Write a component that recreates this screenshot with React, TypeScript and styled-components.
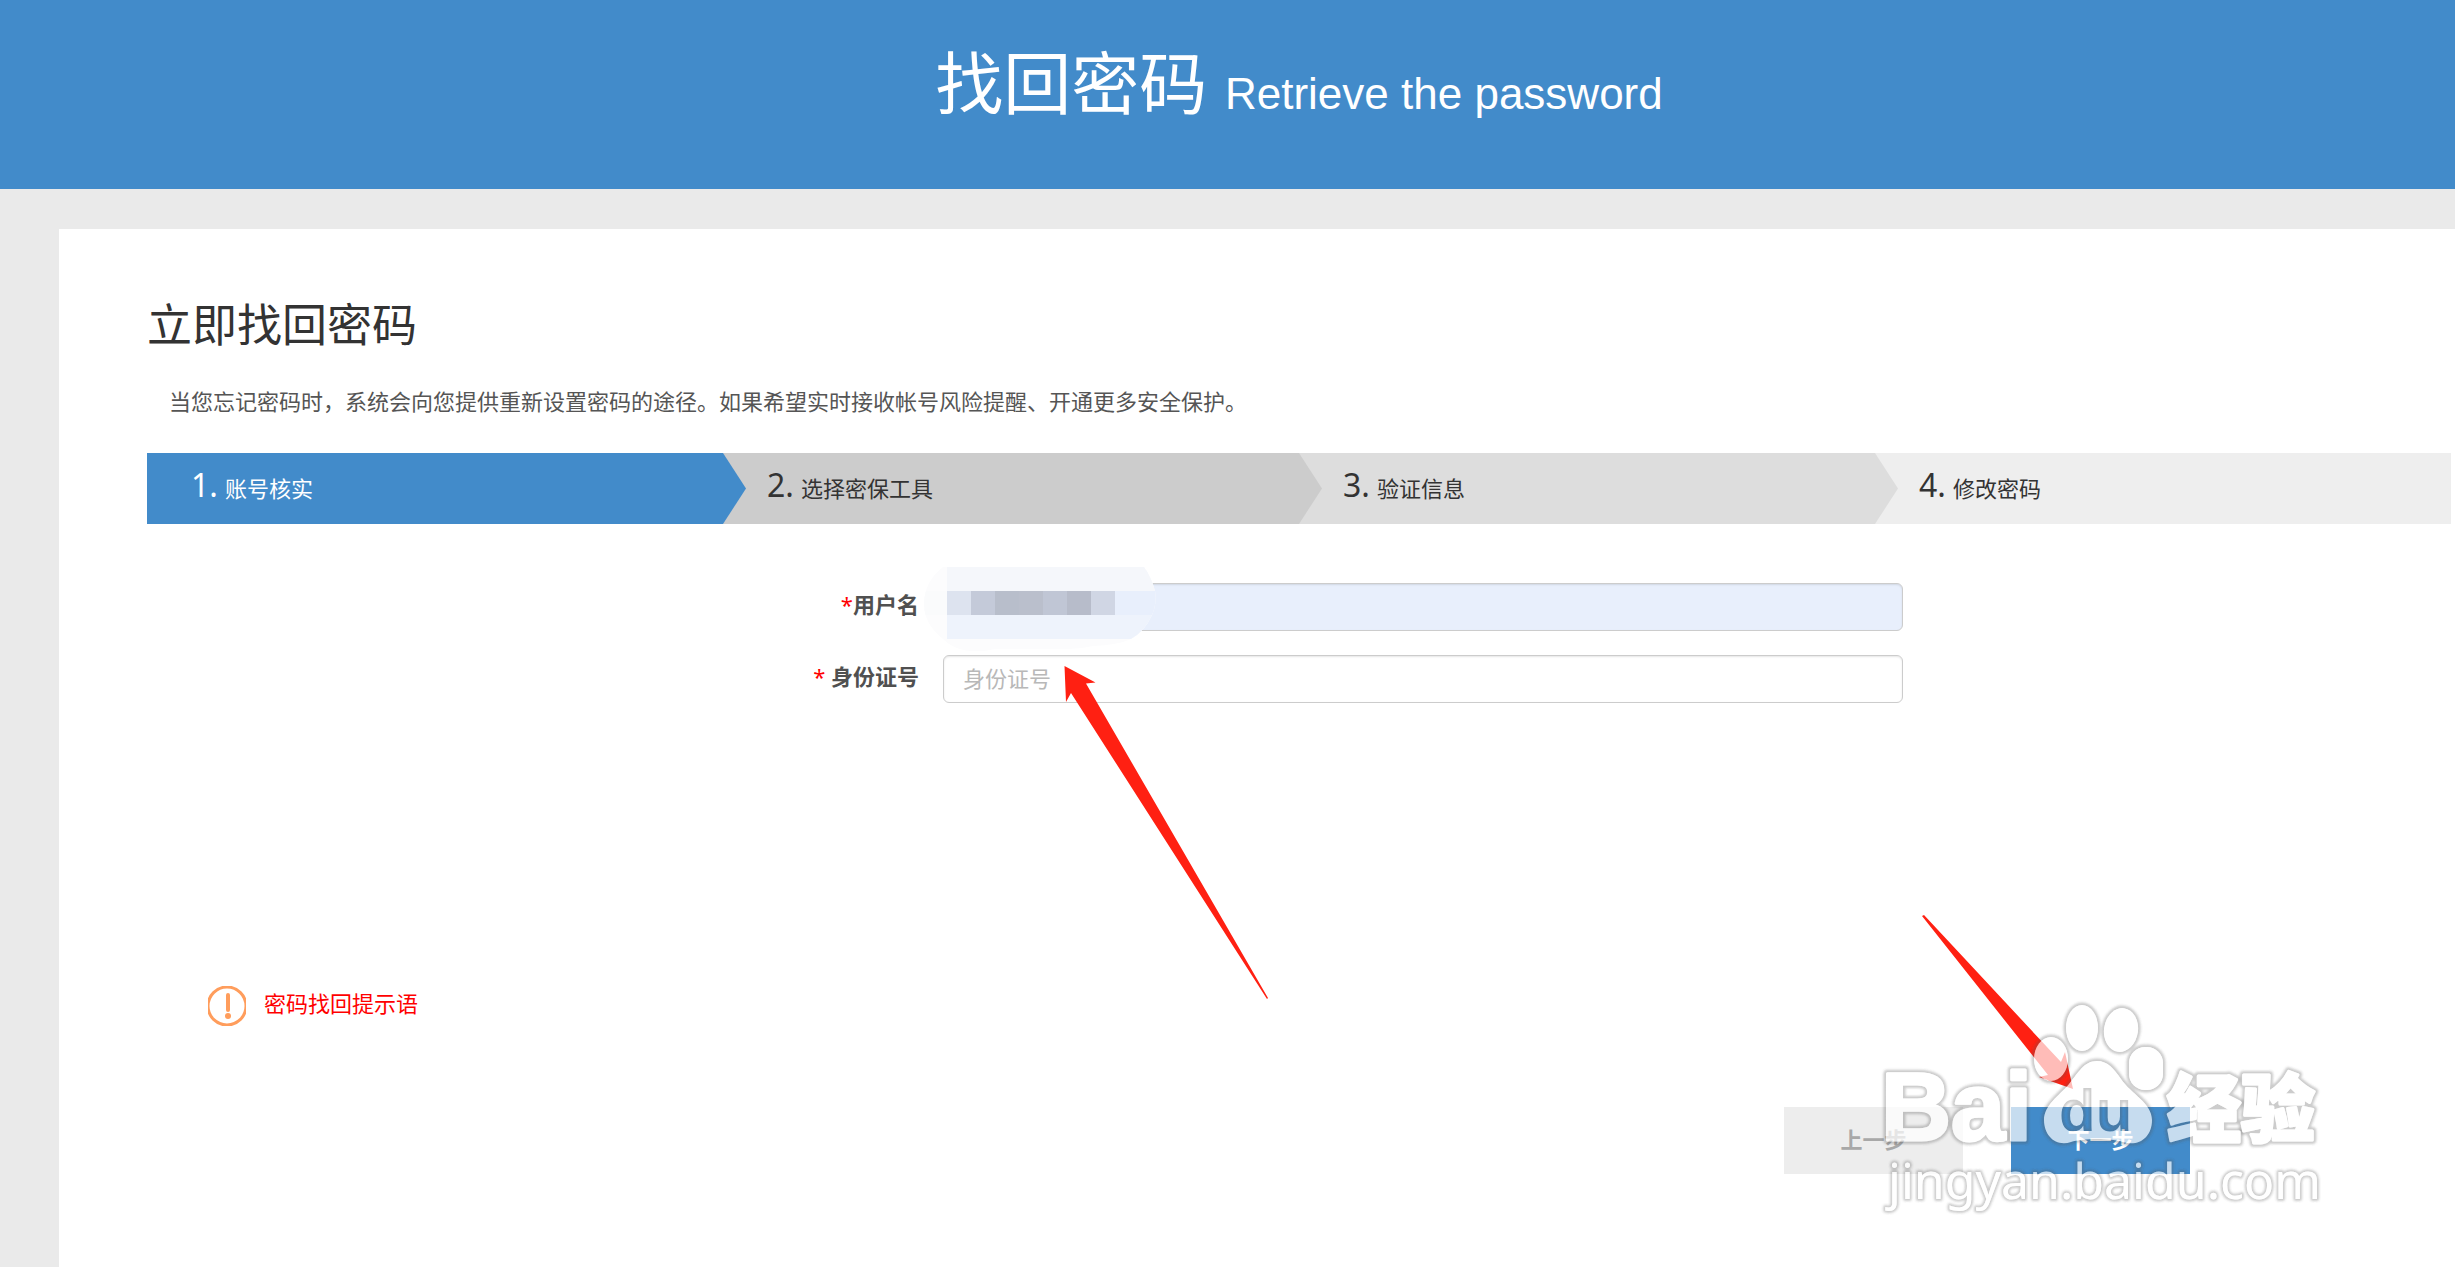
import React from "react";
import styled, { createGlobalStyle } from "styled-components";

const BLUE = "#428bca";
const RED = "#ff2012";

const GlobalStyle = createGlobalStyle`
  *, *::before, *::after { box-sizing: border-box; }
  body {
    margin: 0;
    background: #eaeaea;
    color: #333;
    font: 22px/32px "Noto Sans", "Noto Sans CJK SC", sans-serif;
  }
`;

const Page = styled.div`
  display: flex;
  flex-direction: column;
  min-height: 100vh;
`;

const Banner = styled.header`
  display: flex;
  justify-content: center;
  padding: 35px 4px 58px 147px;
  background: ${BLUE};
  color: #fff;
`;

const BannerTitle = styled.h1`
  margin: 0;
  font-size: 68px;
  line-height: 96px;
  font-weight: 400;
`;

const BannerSubtitle = styled.small`
  font-family: "Liberation Sans", Arial, sans-serif;
  font-size: 44px;
  line-height: 44px;
`;

const Panel = styled.main`
  flex: 1;
  margin: 40px 0 0 59px;
  padding: 64px 4px 68px 88px;
  background: #fff;
`;

const PanelTitle = styled.h2`
  margin: 0;
  font-size: 45px;
  line-height: 64px;
  font-weight: 400;
`;

const Intro = styled.p`
  margin: 28px 0 36px 22px;
  color: #555;
`;

const Steps = styled.ol`
  display: grid;
  grid-template-columns: repeat(4, 1fr);
  margin: 0;
  padding: 0;
  list-style: none;
`;

const Step = styled.li<{ $fill: string; $ink?: string }>`
  position: relative;
  display: flex;
  align-items: baseline;
  gap: 7px;
  height: 71px;
  padding: 10px 0 0 44px;
  line-height: 44px;
  background: ${(p) => p.$fill};
  color: ${(p) => p.$ink ?? "#333"};

  &:not(:last-child)::after {
    content: "";
    position: absolute;
    z-index: 1;
    top: 0;
    left: 100%;
    width: 23px;
    height: 100%;
    background: ${(p) => p.$fill};
    clip-path: polygon(0 0, 100% 50%, 0 100%);
  }
`;

const StepNumber = styled.span`
  font-size: 32px;
`;

const Form = styled.form`
  padding-top: 59px;
`;

const FieldRow = styled.div`
  display: grid;
  grid-template-columns: 772fr 960fr 524fr;
  column-gap: 24px;
  margin-bottom: 24px;
`;

const FieldLabel = styled.label`
  padding-top: 5px;
  height: 48px;
  text-align: right;
  font-weight: 700;
  color: #505050;
`;

const Required = styled.span`
  color: #f00;
  font-weight: 400;
`;

const InputWrap = styled.div`
  position: relative;
`;

const TextInput = styled.input<{ $filled?: boolean }>`
  display: block;
  width: 100%;
  height: 48px;
  padding: 0 19px 2px;
  border: 1px solid #ccc;
  border-radius: 6px;
  background: ${(p) => (p.$filled ? "#e8effc" : "#fff")};
  box-shadow: inset 0 1px 2px rgba(0, 0, 0, 0.1);
  color: #555;
  font: inherit;

  &::placeholder {
    color: #b8b8b8;
    opacity: 1;
  }
`;

const Overlay = styled.svg<{ $left: number; $top: number }>`
  position: absolute;
  z-index: 2;
  left: ${(p) => p.$left}px;
  top: ${(p) => p.$top}px;
  overflow: visible;
  pointer-events: none;
`;

const Notice = styled.div`
  display: flex;
  align-items: center;
  gap: 18px;
  margin: 283px 0 0 61px;
  color: #f00;
`;

const NoticeText = styled.span`
  padding-bottom: 6px;
`;

const Actions = styled.div`
  display: flex;
  justify-content: flex-end;
  gap: 48px;
  margin-top: 81px;
  padding-right: 261px;
`;

const ActionSlot = styled.div`
  position: relative;
`;

const ActionButton = styled.button<{ $primary?: boolean }>`
  display: block;
  width: 179px;
  height: 67px;
  padding: 0 0 4px;
  border: 0;
  background: ${(p) => (p.$primary ? BLUE : "#ededed")};
  color: ${(p) => (p.$primary ? "#fff" : "#a8a8a8")};
  font: inherit;
  font-weight: 700;
`;

const steps = [
  { label: "账号核实", fill: BLUE, ink: "#fff" },
  { label: "选择密保工具", fill: "#ccc" },
  { label: "验证信息", fill: "#ddd" },
  { label: "修改密码", fill: "#eee" },
];

const mosaic = ["#dde3ef", "#c4cad9", "#b8becb", "#babfcc", "#c0c6d5", "#b7bcca", "#d0d6e4"];

function Mosaic() {
  return (
    <Overlay $left={-20} $top={-17} width="234" height="88" aria-hidden="true">
      <clipPath id="blot">
        <path d="M20 1H221Q228 10 232 25Q234 38 229 49Q222 65 208 73Q195 79 170 80Q158 83 145 83H72Q50 88 34 82Q26 79 20 73Q1 58 1 38Q1 16 20 1Z" />
      </clipPath>
      <g clipPath="url(#blot)">
        <rect width="234" height="88" fill="#fcfcfd" />
        <rect x="24" width="210" height="25" fill="#f5f7fb" />
        <rect y="25" width="24" height="24" fill="#fafbfc" />
        <rect x="24" y="25" width="210" height="24" fill="#e8effc" />
        {mosaic.map((color, i) => (
          <rect key={color} x={24 + i * 24} y="25" width="24" height="24" fill={color} />
        ))}
        <rect x="24" y="49" width="210" height="24" fill="#eef3fc" />
      </g>
    </Overlay>
  );
}

function FieldArrow() {
  return (
    <Overlay $left={121} $top={10} width="206" height="336" aria-hidden="true">
      <path d="M0.5 1L31.5 17.5L22 18.5L204 333L203 334L7 28L2 37Z" fill={RED} />
    </Overlay>
  );
}

function ButtonArrow() {
  return (
    <Overlay $left={-89} $top={-193} width="154" height="178" aria-hidden="true">
      <path d="M0 2L2 1L139 148L143 138L151 175L117 163L126 161Z" fill={RED} />
    </Overlay>
  );
}

const PAW =
  "M86 31C97 31 103 39 110 49C120 64 141 73 141 90C141 108 127 117 112 112C101 108 71 108 60 112C45 117 33 106 33 90C33 75 48 66 58 54C68 42 73 31 86 31Z";

function PawShapes() {
  return (
    <>
      <ellipse cx="40" cy="29" rx="17" ry="22" />
      <ellipse cx="71" cy="-2" rx="16" ry="23" />
      <ellipse cx="110" cy="0" rx="17" ry="22" transform="rotate(8 110 0)" />
      <rect x="118" y="17" width="34" height="43" rx="16" />
      <path d={PAW} />
    </>
  );
}

function HeavyTexts() {
  return (
    <>
      <text x="-130" y="110" fontFamily="Liberation Sans, sans-serif" fontSize="97" fontWeight="700">Bai</text>
      <text x="156" y="106" fontFamily="Noto Sans CJK SC, sans-serif" fontSize="74" fontWeight="900">经验</text>
    </>
  );
}

function AddressText() {
  return (
    <text x="-123" y="169" fontFamily="Noto Sans, sans-serif" fontSize="50">jingyan.baidu.com</text>
  );
}

function DuText() {
  return (
    <text x="48" y="101" fontFamily="Liberation Sans, sans-serif" fontSize="60" fontWeight="700">du</text>
  );
}

function Watermark() {
  return (
    <Overlay $left={0} $top={-77} width="320" height="190" aria-hidden="true">
      <filter id="soft" x="-60%" y="-30%" width="220%" height="160%">
        <feGaussianBlur stdDeviation="1" />
      </filter>
      <mask id="inside" maskUnits="userSpaceOnUse" x="-150" y="-50" width="500" height="260">
        <g fill="#fff" stroke="#fff" strokeLinejoin="round">
          <g strokeWidth="0">
            <PawShapes />
            <AddressText />
          </g>
          <g strokeWidth="3">
            <HeavyTexts />
          </g>
        </g>
        <g fill="#000">
          <DuText />
        </g>
      </mask>
      <mask id="outside" maskUnits="userSpaceOnUse" x="-150" y="-50" width="500" height="260">
        <rect x="-150" y="-50" width="500" height="260" fill="#fff" />
        <g fill="#000" stroke="#000" strokeLinejoin="round">
          <g strokeWidth="0">
            <PawShapes />
            <AddressText />
          </g>
          <g strokeWidth="3">
            <HeavyTexts />
          </g>
        </g>
        <g fill="#fff">
          <DuText />
        </g>
      </mask>
      <g mask="url(#outside)">
        <g fill="none" stroke="#555" strokeOpacity="0.3" strokeLinejoin="round" filter="url(#soft)">
          <g strokeWidth="5">
            <PawShapes />
            <DuText />
          </g>
          <g strokeWidth="4">
            <AddressText />
          </g>
          <g strokeWidth="8">
            <HeavyTexts />
          </g>
        </g>
      </g>
      <rect x="-150" y="-50" width="500" height="260" fill="#fff" fillOpacity="0.7" mask="url(#inside)" />
    </Overlay>
  );
}

function AlertIcon() {
  return (
    <svg width="38" height="40" viewBox="0 0 38 40" fill="none" stroke="#ff9d5c" aria-hidden="true">
      <circle cx="19" cy="20" r="19" strokeWidth="3" />
      <path d="M20 9V24" strokeWidth="4" strokeLinecap="round" />
      <circle cx="20" cy="30" r="3" fill="#ff9d5c" stroke="none" />
    </svg>
  );
}

export default function App() {
  return (
    <Page>
      <GlobalStyle />
      <Banner>
        <BannerTitle>
          找回密码 <BannerSubtitle>Retrieve the password</BannerSubtitle>
        </BannerTitle>
      </Banner>
      <Panel>
        <PanelTitle>立即找回密码</PanelTitle>
        <Intro>当您忘记密码时，系统会向您提供重新设置密码的途径。如果希望实时接收帐号风险提醒、开通更多安全保护。</Intro>
        <Steps>
          {steps.map((step, i) => (
            <Step key={step.label} $fill={step.fill} $ink={step.ink}>
              <StepNumber>{i + 1}.</StepNumber>
              <span>{step.label}</span>
            </Step>
          ))}
        </Steps>
        <Form onSubmit={(e) => e.preventDefault()}>
          <FieldRow>
            <FieldLabel htmlFor="username">
              <Required>*</Required>用户名
            </FieldLabel>
            <InputWrap>
              <TextInput id="username" type="text" $filled />
              <Mosaic />
            </InputWrap>
          </FieldRow>
          <FieldRow>
            <FieldLabel htmlFor="idcard">
              <Required>*</Required> 身份证号
            </FieldLabel>
            <InputWrap>
              <TextInput id="idcard" type="text" placeholder="身份证号" />
              <FieldArrow />
            </InputWrap>
          </FieldRow>
          <Notice>
            <AlertIcon />
            <NoticeText>密码找回提示语</NoticeText>
          </Notice>
          <Actions>
            <ActionButton type="button">上一步</ActionButton>
            <ActionSlot>
              <ActionButton type="submit" $primary>
                下一步
              </ActionButton>
              <ButtonArrow />
              <Watermark />
            </ActionSlot>
          </Actions>
        </Form>
      </Panel>
    </Page>
  );
}
